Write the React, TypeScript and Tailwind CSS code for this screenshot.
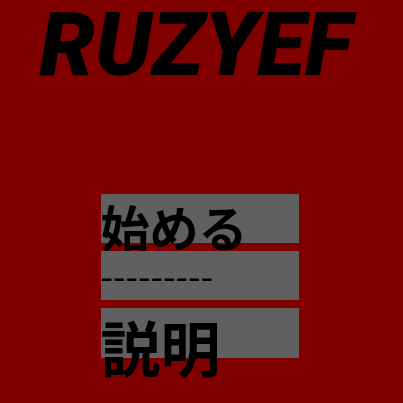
export default function App() {
  return (
    <div className="w-[403px] h-[403px] bg-[#800000] overflow-hidden flex flex-col items-center">
      <h1 className="mt-[1px] mr-[12px] text-[88px] leading-none font-black italic text-black font-['Roboto',sans-serif]">
        RUZYEF
      </h1>
      <div className="mt-[105px] mr-[4px] flex flex-col gap-[8px] w-[198px] font-['Noto_Sans_CJK_JP',sans-serif] font-bold text-black">
        <div className="h-[49px] bg-[#606060] text-[49px] leading-[64px] whitespace-nowrap">始める</div>
        <div className="h-[49px] bg-[#606060] text-[36px] leading-[46px] font-normal whitespace-nowrap">---------</div>
        <div className="h-[50px] bg-[#606060] text-[60px] leading-[76px] whitespace-nowrap">説明</div>
      </div>
    </div>
  );
}
